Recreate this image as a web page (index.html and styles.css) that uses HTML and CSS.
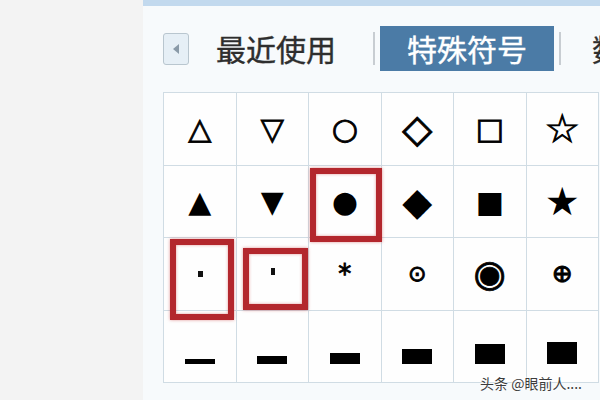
FILE: index.html
```html
<!DOCTYPE html>
<html lang="zh-CN">
<head>
    <meta charset="UTF-8">
    <title>特殊符号</title>
    <link rel="stylesheet" href="styles.css">
</head>
<body>
    <div class="side"></div>
    <div class="panel">
        <div class="tabs">
            <span class="back"><span class="arrow"></span></span>
            <span class="tab">最近使用</span>
            <span class="sep"></span>
            <span class="tab active">特殊符号</span>
            <span class="sep"></span>
            <span class="tab">数学符号</span>
        </div>
        <div class="board">
            <div class="grid">
                <div class="cell outline">△</div>
                <div class="cell outline">▽</div>
                <div class="cell outline">○</div>
                <div class="cell outline big">◇</div>
                <div class="cell outline">□</div>
                <div class="cell outline big">☆</div>

                <div class="cell">▲</div>
                <div class="cell">▼</div>
                <div class="cell">●</div>
                <div class="cell big">◆</div>
                <div class="cell">■</div>
                <div class="cell big">★</div>

                <div class="cell"><span class="dot"></span></div>
                <div class="cell"><span class="dot tall"></span></div>
                <div class="cell outline star">*</div>
                <div class="cell outline ring">⊙</div>
                <div class="cell outline target">◉</div>
                <div class="cell outline plus">⊕</div>

                <div class="cell bars"><span class="bar" style="height: 5px"></span></div>
                <div class="cell bars"><span class="bar" style="height: 8px"></span></div>
                <div class="cell bars"><span class="bar" style="height: 11px"></span></div>
                <div class="cell bars"><span class="bar" style="height: 15px"></span></div>
                <div class="cell bars"><span class="bar" style="height: 20px"></span></div>
                <div class="cell bars"><span class="bar" style="height: 22px"></span></div>
            </div>
            <!-- red marks drawn over the picker -->
            <div class="mark mark-circle"></div>
            <div class="mark mark-dot1"></div>
            <div class="mark mark-dot2"></div>
            <div class="watermark">头条 @眼前人....</div>
        </div>
    </div>
</body>
</html>
```
FILE: styles.css
```css
body {
    margin: 0;
    width: 600px;
    height: 400px;
    overflow: hidden;
    display: flex;
    background: #f3f3f3;
    font-family: "Noto Sans CJK SC", "DejaVu Sans", sans-serif;
}

.side {
    width: 143px;
    flex: none;
}

.panel {
    flex: 1;
    background: #f7fafc;
    border-top: 6px solid #c2d9ee;
    padding-left: 20px;
    overflow: hidden;
}

.tabs {
    display: flex;
    align-items: center;
    height: 45px;
    margin-top: 20px;
    white-space: nowrap;
}

.back {
    width: 24px;
    height: 30px;
    border: 1px solid #b9c6cf;
    border-radius: 3px;
    background: #e6eff6;
    display: flex;
    align-items: center;
    justify-content: center;
    margin-right: 27px;
    flex: none;
}

.arrow {
    width: 0;
    height: 0;
    border-top: 5px solid transparent;
    border-bottom: 5px solid transparent;
    border-right: 6px solid #8a9aa8;
}

.tab {
    font-size: 30px;
    color: #2e2e2e;
    line-height: 45px;
    flex: none;
    -webkit-text-stroke: 0.4px currentColor;
}

.tab.active {
    background: #4b7ba6;
    color: #fff;
    padding: 0 27px;
}

.sep {
    width: 2px;
    height: 33px;
    background: #c8cdd2;
    margin: 0 5px 0 37px;
    flex: none;
}

.tab.active + .sep {
    margin: 0 31px 0 5px;
}

.board {
    position: relative;
    margin-top: 21px;
}

.grid {
    display: grid;
    grid-template-columns: repeat(6, 71.5px);
    grid-auto-rows: 71.5px;
    gap: 1px;
    width: max-content;
    background: #d0dce4;
    border: 1px solid #d0dce4;
}

.cell {
    background: #fefefe;
    display: flex;
    align-items: center;
    justify-content: center;
    font-family: "DejaVu Sans", sans-serif;
    font-size: 30px;
    color: #000;
}

.cell.outline {
    -webkit-text-stroke: 0.9px #000;
}

.cell.big {
    font-size: 39px;
}

.cell.star {
    font-size: 26px;
}

.cell.ring {
    font-size: 22px;
}

.cell.target {
    font-size: 37px;
}

.cell.plus {
    font-size: 25px;
}

.dot {
    width: 5px;
    height: 6px;
    background: #111;
    margin-left: 1px;
}

.dot.tall {
    width: 4px;
    height: 7px;
    margin-top: -4px;
}

.bars {
    align-items: flex-end;
    padding-bottom: 18px;
}

.bar {
    width: 30px;
    background: #000;
}

.mark {
    position: absolute;
    border: 6px solid #b3272d;
    box-shadow: 0 0 3px rgba(200, 50, 50, 0.5), inset 0 0 3px rgba(200, 50, 50, 0.5);
}

.mark-circle {
    left: 147px;
    top: 76px;
    width: 60px;
    height: 62px;
}

.mark-dot1 {
    left: 7px;
    top: 147px;
    width: 52px;
    height: 69px;
}

.mark-dot2 {
    left: 80px;
    top: 156px;
    width: 53px;
    height: 50px;
}

.watermark {
    position: absolute;
    left: 317px;
    top: 281px;
    font-size: 14px;
    color: #3c3c3c;
    text-shadow: 0 0 2px #fff, 0 0 2px #fff;
    white-space: nowrap;
}
```
